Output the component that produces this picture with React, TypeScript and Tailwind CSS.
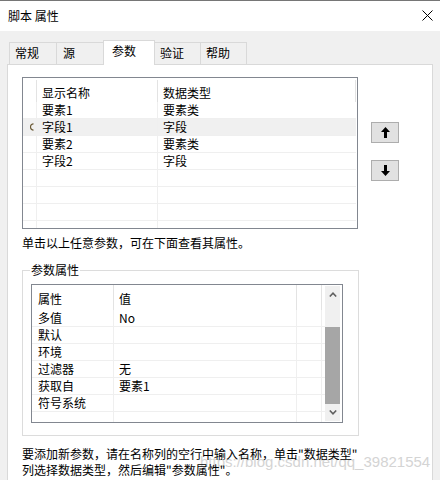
import React from "react";

const upperRows: [string, string, boolean][] = [
  ["要素1", "要素类", false],
  ["字段1", "字段", true],
  ["要素2", "要素类", false],
  ["字段2", "字段", false],
  ["", "", false],
  ["", "", false],
  ["", "", false],
  ["", "", false],
];

const lowerRows: [string, string][] = [
  ["多值", "No"],
  ["默认", ""],
  ["环境", ""],
  ["过滤器", "无"],
  ["获取自", "要素1"],
  ["符号系统", ""],
  ["", ""],
];

function Arrow({ down }: { down?: boolean }) {
  return (
    <svg width="9" height="11" viewBox="0 0 9 11" className={down ? "rotate-180" : ""}>
      <path d="M4.5 0 L9 5 L6 5 L6 11 L3 11 L3 5 L0 5 Z" fill="#000" />
    </svg>
  );
}

function Chevron({ down }: { down?: boolean }) {
  return (
    <svg width="8" height="5" viewBox="0 0 8 5" className={down ? "rotate-180" : ""}>
      <path d="M0.8 4.5 L4 1.2 L7.2 4.5" stroke="#606060" strokeWidth="1.6" fill="none" />
    </svg>
  );
}

export default function App() {
  return (
    <div className="relative w-[440px] h-[480px] flex flex-col bg-[#f0f0f0] overflow-hidden font-['Noto_Sans_CJK_SC','Microsoft_YaHei',sans-serif] text-[12px] leading-[16px] text-black">
      {/* title bar */}
      <div className="h-[31px] shrink-0 bg-white border-t border-[#767676] flex items-center justify-between pl-[8px] pr-[7px] pb-[1px]">
        <span>脚本 属性</span>
        <svg width="11" height="11" viewBox="0 0 11 11">
          <path d="M0.5 0.5 L10.5 10.5 M10.5 0.5 L0.5 10.5" stroke="#000" strokeWidth="1" />
        </svg>
      </div>

      {/* body */}
      <div className="flex-1 flex flex-col px-[7px] pt-[9px] min-h-0">
        {/* tabs */}
        <div className="flex items-end pl-[2px] h-[24px] relative z-10">
          <div className="w-[48px] h-[22px] border border-b-0 border-[#d9d9d9] bg-[#f0f0f0] pl-[5px] pt-[2px]">常规</div>
          <div className="-ml-px w-[48px] h-[22px] border border-b-0 border-[#d9d9d9] bg-[#f0f0f0] pl-[6px] pt-[2px]">源</div>
          <div className="-ml-px w-[52px] h-[25px] -mb-px border border-b-0 border-[#d9d9d9] bg-white pl-[8px] pt-[2px] relative z-10">参数</div>
          <div className="-ml-px w-[47px] h-[22px] border border-b-0 border-[#d9d9d9] bg-[#f0f0f0] pl-[5px] pt-[2px]">验证</div>
          <div className="-ml-px w-[47px] h-[22px] border border-b-0 border-[#d9d9d9] bg-[#f0f0f0] pl-[5px] pt-[2px]">帮助</div>
        </div>

        {/* panel */}
        <div className="flex-1 bg-white border border-[#d9d9d9] border-b-0 pl-[14px] pt-[12px] flex flex-col">
          {/* upper section */}
          <div className="flex">
            <div className="w-[336px] h-[152px] border border-[#828790] overflow-hidden">
              {/* header */}
              <div className="flex items-end h-[24px]">
                <div className="w-[14px] h-[22px] border-r border-[#e3e3e3]" />
                <div className="w-[121px] h-[22px] border-r border-[#e3e3e3] pl-[5px] pt-[5px]">显示名称</div>
                <div className="w-[198px] h-[22px] border-r border-[#e3e3e3] pl-[5px] pt-[5px]">数据类型</div>
              </div>
              {upperRows.map(([a, b, sel], i) => (
                <div
                  key={i}
                  className={`flex w-[333px] h-[17px] border-b border-[#efefef] ${sel ? "bg-[#f0f0f0]" : ""}`}
                >
                  <div className="w-[14px] border-r border-[#efefef] flex items-center pl-[7px]">
                    {sel && (
                      <svg width="5" height="8" viewBox="0 0 5 8">
                        <path d="M3.5 0.8 A3 3.2 0 0 0 3.5 7.2" stroke="#6b5a35" strokeWidth="1.2" fill="none" />
                      </svg>
                    )}
                  </div>
                  <div className="w-[121px] border-r border-[#efefef] pl-[5px] leading-[16px]">{a}</div>
                  <div className="flex-1 pl-[5px] leading-[16px]">{b}</div>
                </div>
              ))}
            </div>
            <div className="flex flex-col pt-[45px] gap-[17px] ml-[13px]">
              <div className="w-[28px] h-[21px] bg-[#e1e1e1] border border-[#adadad] flex items-center justify-center">
                <Arrow />
              </div>
              <div className="w-[28px] h-[21px] bg-[#e1e1e1] border border-[#adadad] flex items-center justify-center">
                <Arrow down />
              </div>
            </div>
          </div>

          <div className="mt-[6px]">单击以上任意参数，可在下面查看其属性。</div>

          {/* group box */}
          <div className="relative mt-[19px] w-[337px] h-[166px] border border-[#dcdcdc] pl-[8px] pt-[13px]">
            <span className="absolute left-[7px] -top-[9px] bg-white px-[1px]">参数属性</span>
            <div className="w-[312px] h-[139px] border border-[#828790] flex overflow-hidden">
              <div className="w-[293px] flex flex-col">
                <div className="flex h-[25px] shrink-0">
                  <div className="w-[82px] border-r border-[#e3e3e3] pl-[6px] pt-[6px]">属性</div>
                  <div className="w-[183px] border-r border-[#e3e3e3] pl-[5px] pt-[6px]">值</div>
                  <div className="w-[25px] border-r border-[#e3e3e3]" />
                </div>
                {lowerRows.map(([a, b], i) => (
                  <div key={i} className="flex h-[17px] shrink-0 border-b border-[#efefef]">
                    <div className="w-[82px] border-r border-[#efefef] pl-[6px]">{a}</div>
                    <div className="w-[183px] border-r border-[#efefef] pl-[5px]">{b}</div>
                    <div className="w-[25px] border-r border-[#efefef]" />
                  </div>
                ))}
              </div>
              <div className="w-[15px] my-[1px] bg-[#f0f0f0] flex flex-col">
                <div className="h-[17px] flex items-center justify-center">
                  <Chevron />
                </div>
                <div className="flex-1">
                  <div className="mt-[24px] h-[77px] bg-[#a6a6a6]" />
                </div>
                <div className="h-[17px] flex items-center justify-center">
                  <Chevron down />
                </div>
              </div>
            </div>
          </div>

          <div className="mt-[10px] relative z-10">
            <div>要添加新参数，请在名称列的空行中输入名称，单击"数据类型"</div>
            <div>列选择数据类型，然后编辑"参数属性"。</div>
          </div>
        </div>
      </div>

      {/* watermark */}
      <div className="absolute left-[200px] top-[454px] font-['Liberation_Sans',Arial,sans-serif] text-[15px] leading-[16px] text-[#d4d4d4] pointer-events-none">
        https://blog.csdn.net/qq_39821554
      </div>
    </div>
  );
}
